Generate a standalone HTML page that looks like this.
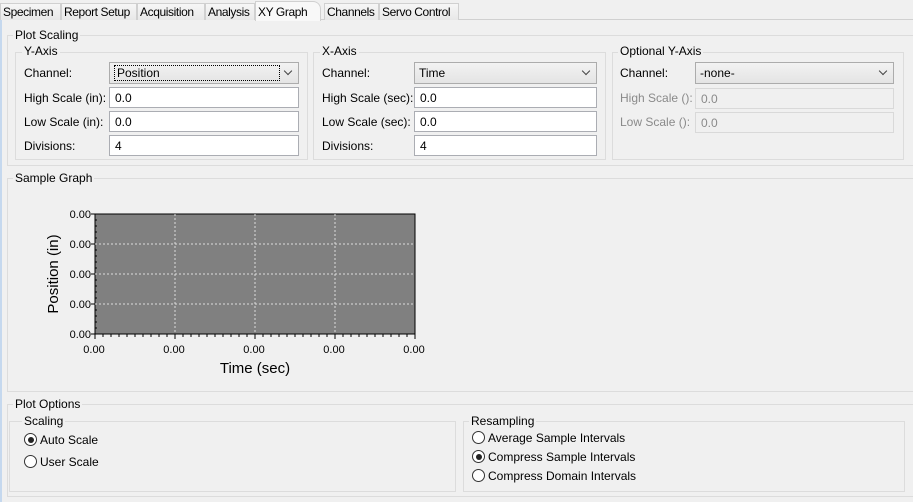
<!DOCTYPE html>
<html><head><style>
*{box-sizing:border-box;margin:0;padding:0}
body{width:913px;height:502px;background:#f0f0f0;font-family:"Liberation Sans",sans-serif;font-size:12px;color:#000;position:relative;overflow:hidden}
.a{position:absolute;white-space:nowrap}
.box{position:absolute;border:1px solid #dcdcdc}
.lbl{position:absolute;background:#f0f0f0;padding:0 2px;white-space:nowrap}
.in{position:absolute;height:21px;background:#fff;border:1px solid #abadb3;padding:3px 5px;white-space:nowrap}
.dis{background:#f0f0f0;border-color:#d9d9d9;color:#8a8a8a}
.sel{position:absolute;height:22px;background:linear-gradient(#f2f2f2,#e4e4e4);border:1px solid #acacac;padding:3px 4px;white-space:nowrap;overflow:hidden}
.sel:after{content:"";position:absolute;right:7px;top:5px;width:5px;height:5px;border-right:1.5px solid #444;border-bottom:1.5px solid #444;transform:rotate(45deg)}
.g{color:#8a8a8a}
.tab{position:absolute;top:3px;height:17px;border:1px solid #d0d0d0;border-bottom:none;background:linear-gradient(#f6f6f6,#e8e8e8);padding:1px 2px;font-size:12px;white-space:nowrap;overflow:hidden;letter-spacing:-0.4px}
.r{position:absolute;width:13px;height:13px;border:1px solid #333;border-radius:50%;background:#fff}
.r.on:after{content:"";position:absolute;left:2.5px;top:2.5px;width:6px;height:6px;border-radius:50%;background:#222}
</style></head><body>
<div class="a" style="left:0;top:0;width:913px;height:20px;background:#f0f0f0;border-bottom:1px solid #d0d0d0"></div>
<div class="tab" style="left:0;width:61px">Specimen</div>
<div class="tab" style="left:61px;width:76px">Report Setup</div>
<div class="tab" style="left:137px;width:68px">Acquisition</div>
<div class="tab" style="left:205px;width:50px">Analysis</div>
<div class="tab" style="left:255px;top:1px;height:20px;width:66px;background:#f8f8f8;border-radius:0 8px 0 0;padding-top:3px">XY Graph</div>
<div class="tab" style="left:324px;width:55px">Channels</div>
<div class="tab" style="left:379px;width:80px">Servo Control</div>
<div class="a" style="left:0;top:20px;width:2px;height:482px;background:#c5d8ee"></div>

<div class="box" style="left:7px;top:35px;width:910px;height:131px"></div>
<div class="lbl" style="left:13px;top:28px">Plot Scaling</div>
<div class="box" style="left:15px;top:52px;width:293px;height:108px"></div>
<div class="lbl" style="left:22px;top:44px">Y-Axis</div>
<div class="box" style="left:313px;top:52px;width:293px;height:108px"></div>
<div class="lbl" style="left:320px;top:44px">X-Axis</div>
<div class="box" style="left:612px;top:52px;width:292px;height:108px"></div>
<div class="lbl" style="left:618px;top:44px">Optional Y-Axis</div>

<div class="a" style="left:24px;top:66px">Channel:</div>
<div class="sel" style="left:109px;top:62px;width:190px"><span style="display:inline-block;border:1px dotted #000;width:166px;padding:0 2px;margin-top:-1px">Position</span></div>
<div class="a" style="left:24px;top:91px">High Scale (in):</div>
<div class="in" style="left:109px;top:87px;width:190px">0.0</div>
<div class="a" style="left:24px;top:115px">Low Scale (in):</div>
<div class="in" style="left:109px;top:111px;width:190px">0.0</div>
<div class="a" style="left:24px;top:139px">Divisions:</div>
<div class="in" style="left:109px;top:135px;width:190px">4</div>

<div class="a" style="left:322px;top:66px">Channel:</div>
<div class="sel" style="left:414px;top:62px;width:183px">Time</div>
<div class="a" style="left:322px;top:91px">High Scale (sec):</div>
<div class="in" style="left:414px;top:87px;width:183px">0.0</div>
<div class="a" style="left:322px;top:115px">Low Scale (sec):</div>
<div class="in" style="left:414px;top:111px;width:183px">0.0</div>
<div class="a" style="left:322px;top:139px">Divisions:</div>
<div class="in" style="left:414px;top:135px;width:183px">4</div>

<div class="a" style="left:620px;top:66px">Channel:</div>
<div class="sel" style="left:695px;top:62px;width:199px">-none-</div>
<div class="a g" style="left:620px;top:91px">High Scale ():</div>
<div class="in dis" style="left:695px;top:88px;width:199px">0.0</div>
<div class="a g" style="left:620px;top:115px">Low Scale ():</div>
<div class="in dis" style="left:695px;top:112px;width:199px">0.0</div>

<div class="box" style="left:7px;top:178px;width:910px;height:214px"></div>
<div class="lbl" style="left:13px;top:171px">Sample Graph</div>
<svg class="a" style="left:0;top:200px" width="450" height="180">
<rect x="95" y="14" width="320" height="120" fill="#808080" stroke="#000" stroke-width="1"/>
<g stroke="#ddd" stroke-dasharray="2,2" stroke-width="1">
<line x1="175" y1="14" x2="175" y2="134"/><line x1="255" y1="14" x2="255" y2="134"/><line x1="335" y1="14" x2="335" y2="134"/>
<line x1="95" y1="44" x2="415" y2="44"/><line x1="95" y1="74" x2="415" y2="74"/><line x1="95" y1="104" x2="415" y2="104"/>
</g>
<g stroke="#000" stroke-width="1">
<path d="M95 134v5M103 134v3M111 134v3M119 134v3M127 134v3M135 134v3M143 134v3M151 134v3M159 134v3M167 134v3M175 134v5M183 134v3M191 134v3M199 134v3M207 134v3M215 134v3M223 134v3M231 134v3M239 134v3M247 134v3M255 134v5M263 134v3M271 134v3M279 134v3M287 134v3M295 134v3M303 134v3M311 134v3M319 134v3M327 134v3M335 134v5M343 134v3M351 134v3M359 134v3M367 134v3M375 134v3M383 134v3M391 134v3M399 134v3M407 134v3M415 134v5"/>
<path d="M95 14h-4M95 44h-4M95 74h-4M95 104h-4M95 134h-4M95 20h2M95 26h2M95 32h2M95 38h2M95 50h2M95 56h2M95 62h2M95 68h2M95 80h2M95 86h2M95 92h2M95 98h2M95 110h2M95 116h2M95 122h2M95 128h2"/>
</g>
<g font-family="Liberation Sans" font-size="11" text-anchor="end">
<text x="91" y="18">0.00</text><text x="91" y="48">0.00</text><text x="91" y="78">0.00</text><text x="91" y="108">0.00</text><text x="91" y="138">0.00</text></g>
<g font-family="Liberation Sans" font-size="11" text-anchor="middle">
<text x="94" y="153">0.00</text><text x="174" y="153">0.00</text><text x="254" y="153">0.00</text><text x="334" y="153">0.00</text><text x="414" y="153">0.00</text></g>
<text x="255" y="173" font-family="Liberation Sans" font-size="15" text-anchor="middle">Time (sec)</text>
<text transform="translate(58,74) rotate(-90)" font-family="Liberation Sans" font-size="15" text-anchor="middle">Position (in)</text>
</svg>

<div class="box" style="left:7px;top:404px;width:910px;height:93px"></div>
<div class="lbl" style="left:13px;top:397px">Plot Options</div>
<div class="box" style="left:9px;top:421px;width:447px;height:71px"></div>
<div class="lbl" style="left:22px;top:414px">Scaling</div>
<div class="box" style="left:463px;top:421px;width:442px;height:71px"></div>
<div class="lbl" style="left:469px;top:414px">Resampling</div>
<div class="r on" style="left:24px;top:433px"></div><div class="a" style="left:40px;top:433px">Auto Scale</div>
<div class="r" style="left:24px;top:455px"></div><div class="a" style="left:40px;top:455px">User Scale</div>
<div class="r" style="left:472px;top:431px"></div><div class="a" style="left:488px;top:431px">Average Sample Intervals</div>
<div class="r on" style="left:472px;top:450px"></div><div class="a" style="left:488px;top:450px">Compress Sample Intervals</div>
<div class="r" style="left:472px;top:469px"></div><div class="a" style="left:488px;top:469px">Compress Domain Intervals</div>
</body></html>
